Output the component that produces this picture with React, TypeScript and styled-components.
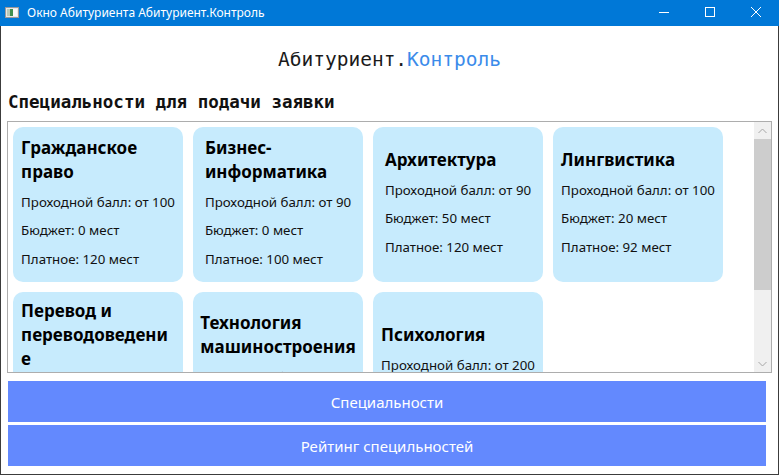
import React from 'react';
import styled, { createGlobalStyle } from 'styled-components';

const GlobalStyle = createGlobalStyle`
    html, body {
        margin: 0;
        padding: 0;
        background: #ffffff;
    }
    body {
        font-family: "Noto Sans", "Open Sans", sans-serif;
    }
    * {
        box-sizing: border-box;
    }
`;

const Window = styled.div`
    width: 779px;
    height: 475px;
    display: flex;
    flex-direction: column;
    overflow: hidden;
    background: #ffffff;
`;

const TitleBar = styled.div`
    height: 26px;
    flex: none;
    display: flex;
    align-items: center;
    padding-bottom: 2px;
    background: #0078d7;
    color: #ffffff;
`;

const AppIcon = styled.svg`
    flex: none;
    margin-left: 5px;
`;

const TitleText = styled.span`
    flex: 1;
    margin-left: 8px;
    font-size: 12px;
    white-space: nowrap;
`;

const Controls = styled.div`
    display: flex;
    align-self: stretch;
`;

const ControlButton = styled.div`
    width: 46px;
    display: flex;
    align-items: center;
    justify-content: center;
`;

const Body = styled.div`
    flex: 1;
    min-height: 0;
    display: flex;
    flex-direction: column;
    padding: 0 6px 8px;
    border: 1px solid #3c3c3c;
    border-top: none;
`;

const Heading = styled.h1`
    margin: 0;
    padding-top: 22px;
    text-align: center;
    font-family: "DejaVu Sans Mono", "Liberation Mono", monospace;
    font-size: 19.5px;
    font-weight: normal;
    line-height: 24px;
    color: #1a1a1a;
`;

const Accent = styled.span`
    color: #3b8bea;
`;

const SubHeading = styled.h2`
    margin: 19px 0 0 1px;
    font-family: "DejaVu Sans Mono", "Liberation Mono", monospace;
    font-size: 17.5px;
    font-weight: bold;
    line-height: 22px;
    color: #111111;
`;

const Panel = styled.div`
    flex: none;
    height: 252px;
    margin-top: 8px;
    display: flex;
    border: 1px solid #adadad;
`;

// строки сетки растут по содержимому, даже если оно не влезает в панель
const CardArea = styled.div`
    flex: 1;
    overflow: hidden;
    padding: 5px;
    display: grid;
    grid-template-columns: repeat(4, 170px);
    grid-auto-rows: minmax(min-content, max-content);
    gap: 10px;
    align-content: start;
`;

const Card = styled.div`
    min-height: 155px;
    background: #c7ebfd;
    border-radius: 10px;
    padding: 7px 8px;
    display: flex;
    flex-direction: column;
    align-items: center;
    justify-content: center;
`;

const CardContent = styled.div`
    display: flex;
    flex-direction: column;
    align-items: flex-start;
`;

const CardTitle = styled.div`
    margin: 0 0 4px;
    font-size: 17px;
    font-weight: bold;
    line-height: 24px;
    color: #000000;
    white-space: nowrap;
`;

const CardLine = styled.div`
    margin: 5px 0;
    font-size: 13.3px;
    line-height: 18.5px;
    color: #111111;
    white-space: nowrap;
`;

const ScrollBar = styled.div`
    width: 17px;
    flex: none;
    display: flex;
    flex-direction: column;
    background: #f0f0f0;
`;

const ScrollArrow = styled.div`
    height: 17px;
    flex: none;
    display: flex;
    align-items: center;
    justify-content: center;
`;

const ScrollTrack = styled.div`
    flex: 1;
`;

const ScrollThumb = styled.div`
    height: 151px;
    background: #cdcdcd;
`;

const ButtonStack = styled.div`
    margin: 8px 6px 0 1px;
    display: flex;
    flex-direction: column;
    gap: 3px;
`;

const NavButton = styled.button`
    height: 41px;
    border: none;
    padding: 0;
    background: #6389fe;
    color: #ffffff;
    font-family: "Noto Sans", "Open Sans", sans-serif;
    font-size: 15px;
`;

type Specialty = {
    title: string[];   // строки названия, как они переносятся в карточке
    score: number;
    budget: number;
    paid: number;
};

const specialties: Specialty[] = [
    { title: ['Гражданское', 'право'], score: 100, budget: 0, paid: 120 },
    { title: ['Бизнес-', 'информатика'], score: 90, budget: 0, paid: 100 },
    { title: ['Архитектура'], score: 90, budget: 50, paid: 120 },
    { title: ['Лингвистика'], score: 100, budget: 20, paid: 92 },
    { title: ['Перевод и', 'переводоведени', 'е'], score: 120, budget: 10, paid: 60 },
    { title: ['Технология', 'машиностроения'], score: 110, budget: 30, paid: 40 },
    { title: ['Психология'], score: 200, budget: 15, paid: 80 },
];

const Chevron = ({ up }: { up?: boolean }) => (
    <svg width="9" height="6" viewBox="0 0 9 6">
        <polyline
            points={up ? '0.5,5 4.5,1 8.5,5' : '0.5,1 4.5,5 8.5,1'}
            fill="none"
            stroke="#a6a6a6"
            strokeWidth="1"
        />
    </svg>
);

const App = () => {
    return (
        <>
            <GlobalStyle />
            <Window>
                <TitleBar>
                    <AppIcon width="14" height="11" viewBox="0 0 14 11">
                        <rect x="0.5" y="0.5" width="13" height="10" fill="#e8e8e8" stroke="#9a9a9a" />
                        <rect x="2" y="2" width="3" height="7" fill="#b9c9b9" />
                        <rect x="5" y="2" width="3" height="7" fill="#3f8f4f" />
                        <rect x="8" y="2" width="4" height="7" fill="#f8f8f8" />
                    </AppIcon>
                    <TitleText>Окно Абитуриента Абитуриент.Контроль</TitleText>
                    <Controls>
                        <ControlButton>
                            <svg width="10" height="10" viewBox="0 0 10 10">
                                <line x1="0" y1="5.5" x2="10" y2="5.5" stroke="#fff" strokeWidth="1" />
                            </svg>
                        </ControlButton>
                        <ControlButton>
                            <svg width="10" height="10" viewBox="0 0 10 10">
                                <rect x="0.5" y="0.5" width="9" height="9" fill="none" stroke="#fff" strokeWidth="1" />
                            </svg>
                        </ControlButton>
                        <ControlButton>
                            <svg width="10" height="10" viewBox="0 0 10 10">
                                <path d="M0 0 L10 10 M10 0 L0 10" stroke="#fff" strokeWidth="1" />
                            </svg>
                        </ControlButton>
                    </Controls>
                </TitleBar>

                <Body>
                    <Heading>
                        Абитуриент.<Accent>Контроль</Accent>
                    </Heading>
                    <SubHeading>Специальности для подачи заявки</SubHeading>

                    <Panel>
                        <CardArea>
                            {specialties.map(s => (
                                <Card key={s.title.join('')}>
                                    <CardContent>
                                        <CardTitle>
                                            {s.title.map((line, i) => (
                                                <React.Fragment key={i}>
                                                    {i > 0 && <br />}
                                                    {line}
                                                </React.Fragment>
                                            ))}
                                        </CardTitle>
                                        <CardLine>Проходной балл: от {s.score}</CardLine>
                                        <CardLine>Бюджет: {s.budget} мест</CardLine>
                                        <CardLine>Платное: {s.paid} мест</CardLine>
                                    </CardContent>
                                </Card>
                            ))}
                        </CardArea>
                        <ScrollBar>
                            <ScrollArrow>
                                <Chevron up />
                            </ScrollArrow>
                            <ScrollTrack>
                                <ScrollThumb />
                            </ScrollTrack>
                            <ScrollArrow>
                                <Chevron />
                            </ScrollArrow>
                        </ScrollBar>
                    </Panel>

                    <ButtonStack>
                        <NavButton>Специальности</NavButton>
                        <NavButton>Рейтинг специльностей</NavButton>
                    </ButtonStack>
                </Body>
            </Window>
        </>
    );
};

export default App;
